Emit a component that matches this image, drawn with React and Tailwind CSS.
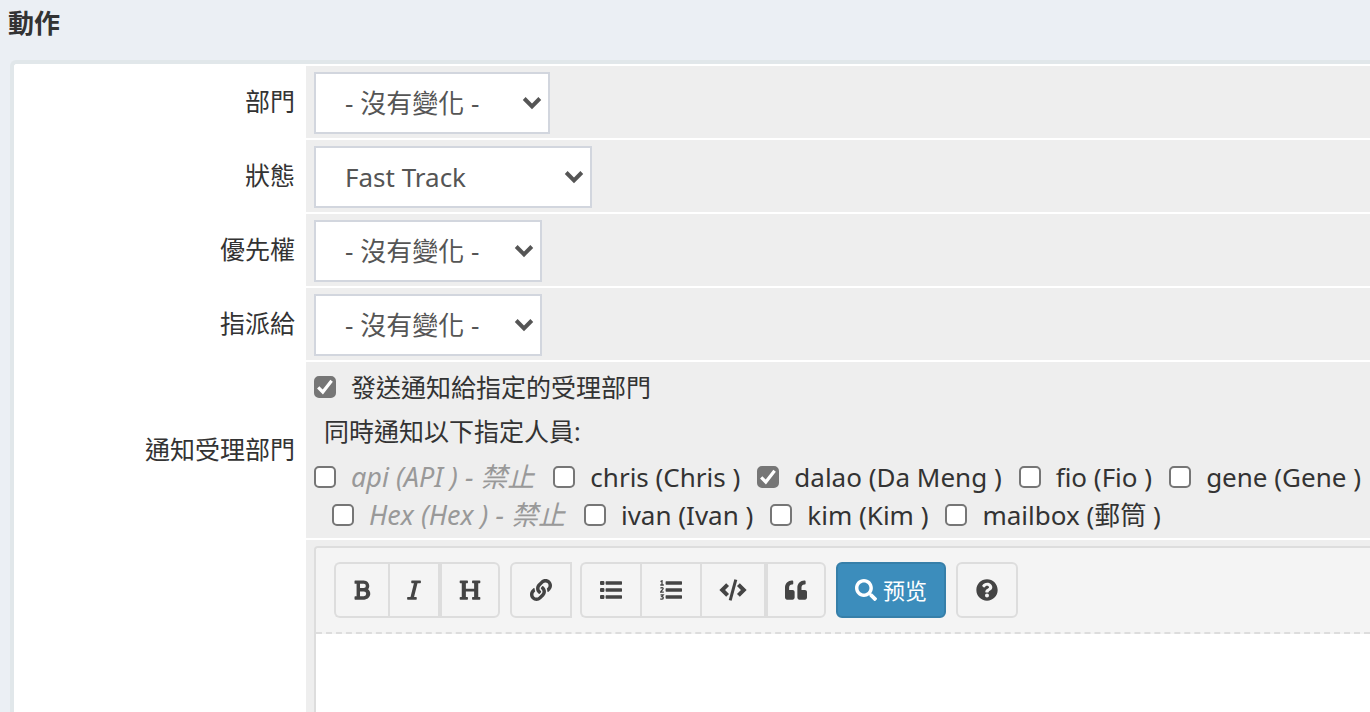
import React from "react";
import {
  FaBold,
  FaItalic,
  FaHeading,
  FaLink,
  FaQuoteLeft,
  FaSearch,
  FaQuestionCircle,
} from "react-icons/fa";

const NO_CHANGE = "- 沒有變化 -";

const selects = [
  { id: "dept", label: "部門", value: NO_CHANGE, width: "w-[236px]" },
  { id: "status", label: "狀態", value: "Fast Track", width: "w-[278px]" },
  { id: "priority", label: "優先權", value: NO_CHANGE, width: "w-[228px]" },
  { id: "assign", label: "指派給", value: NO_CHANGE, width: "w-[228px]" },
];

const people = [
  { id: "api", label: "api (API ) - 禁止", disabled: true },
  { id: "chris", label: "chris (Chris )" },
  { id: "dalao", label: "dalao (Da Meng )", checked: true },
  { id: "fio", label: "fio (Fio )" },
  { id: "gene", label: "gene (Gene )" },
  { id: "hex", label: "Hex (Hex ) - 禁止", disabled: true },
  { id: "ivan", label: "ivan (Ivan )" },
  { id: "kim", label: "kim (Kim )" },
  { id: "mailbox", label: "mailbox (郵筒 )" },
];

function BulletListIcon() {
  return (
    <svg viewBox="0 0 22 18" className="h-[18px] w-[22px]" fill="currentColor">
      <rect x="0" y="0" width="4.4" height="4" rx="1" />
      <rect x="0" y="7" width="4.4" height="4" rx="1" />
      <rect x="0" y="14" width="4.4" height="4" rx="1" />
      <rect x="5.6" y="0.3" width="16.4" height="3.4" rx="0.6" />
      <rect x="5.6" y="7.3" width="16.4" height="3.4" rx="0.6" />
      <rect x="5.6" y="14.3" width="16.4" height="3.4" rx="0.6" />
    </svg>
  );
}

function NumberListIcon() {
  return (
    <svg viewBox="0 0 22 20" className="h-5 w-[22px]" fill="currentColor">
      <g fill="none" stroke="currentColor" strokeWidth="1.3">
        <path d="M0.5 1.6 2 0.8V5M0.3 5H3.8" />
        <path d="M0.5 8.4C1.2 7.2 3.3 7.4 3.1 8.8 3 9.9 0.9 10.8 0.7 12.2H3.8" />
        <path d="M0.5 14.8H3.2L1.8 16.5C3.9 16.6 3.6 19.2 1.8 19.2 1.1 19.2 0.7 19 0.3 18.6" />
      </g>
      <rect x="5.6" y="1.3" width="16.4" height="3.4" rx="0.6" />
      <rect x="5.6" y="8.3" width="16.4" height="3.4" rx="0.6" />
      <rect x="5.6" y="15.3" width="16.4" height="3.4" rx="0.6" />
    </svg>
  );
}

function CodeIcon() {
  return (
    <svg viewBox="0 0 28 22" className="h-[22px] w-7" fill="none" stroke="currentColor">
      <path strokeWidth="4" d="M8.6 5.6 3.2 11 8.6 16.4M19.4 5.6 24.8 11 19.4 16.4" />
      <path strokeWidth="3" d="M16.8 0.6 11.2 21.4" />
    </svg>
  );
}

function Row({ label, htmlFor, children, className = "" }) {
  return (
    <div className={`flex ${className}`}>
      <div className="flex w-[292px] shrink-0 items-center justify-end pr-[11px] pb-[2px]">
        {label && <label htmlFor={htmlFor}>{label}</label>}
      </div>
      <div className="min-w-0 flex-1 bg-[#eeeeee] pl-2">{children}</div>
    </div>
  );
}

function Select({ id, value, width }) {
  return (
    <div className={`relative ${width}`}>
      <select
        id={id}
        defaultValue={value}
        className="block h-[62px] w-full appearance-none border-2 border-[#d2d6de] bg-white pl-[29px] text-[26px] text-[#555555]"
      >
        <option>{value}</option>
      </select>
      <svg
        viewBox="0 0 20 14"
        className="pointer-events-none absolute top-6 right-2 h-[14px] w-5"
        fill="none"
        stroke="#555555"
        strokeWidth="4"
      >
        <path d="M2.2 2.5 10 10.3 17.8 2.5" />
      </svg>
    </div>
  );
}

function Check({ id, label, checked, disabled }) {
  return (
    <div className="flex items-center gap-[15px] whitespace-nowrap">
      <span className="relative block size-[22px] shrink-0">
        <input
          id={id}
          type="checkbox"
          defaultChecked={checked}
          className="peer block size-[22px] appearance-none rounded-[5px] border-2 border-[#767676] bg-white checked:bg-[#767676]"
        />
        <svg
          viewBox="0 0 22 22"
          className="pointer-events-none absolute inset-0 hidden size-[22px] peer-checked:block"
          fill="none"
          stroke="#ffffff"
          strokeWidth="3.2"
        >
          <path d="M4.2 11.4 8.8 16 17.6 4.8" />
        </svg>
      </span>
      <label
        htmlFor={id}
        className={disabled ? "pr-[2px] text-[27px] leading-[38px] text-[#999999] italic" : ""}
      >
        {label}
      </label>
    </div>
  );
}

function Tool({ title, className, children }) {
  return (
    <button
      type="button"
      aria-label={title}
      className={`flex h-14 items-center justify-center border-2 border-[#dddddd] bg-[#f4f4f4] text-[22px] text-[#444444] ${className}`}
    >
      {children}
    </button>
  );
}

export default function App() {
  return (
    <div className="flex min-h-screen flex-col overflow-x-hidden bg-[#ebeff4] font-['Noto_Sans','Noto_Sans_CJK_TC',sans-serif] text-[25px] leading-[38px] text-[#333333]">
      <h2 className="h-[60px] pt-1 pl-2 text-[26px] leading-[38px] font-bold">動作</h2>
      <div className="ml-[10px] flex flex-1 flex-col gap-[2px] rounded-tl-md border-t-4 border-l-4 border-[#e1e7ea] bg-white pt-[2px]">
        {selects.map((s) => (
          <Row key={s.id} label={s.label} htmlFor={s.id}>
            <div className="pt-[6px] pb-1">
              <Select {...s} />
            </div>
          </Row>
        ))}
        <Row label="通知受理部門" htmlFor="notify">
          <div className="h-[176px] pt-[6px]">
            <Check id="notify" label="發送通知給指定的受理部門" checked />
            <p className="mt-[6px] mb-2 pl-[10px]">同時通知以下指定人員:</p>
            <div className="flex flex-wrap gap-x-[17px] text-[26px] leading-[38px] [&>*:nth-child(6)]:ml-[18px]">
              {people.map((p) => (
                <Check key={p.id} {...p} />
              ))}
            </div>
          </div>
        </Row>
        <Row className="flex-1">
          <div className="flex h-full flex-col pt-[6px]">
            <div className="flex flex-1 flex-col rounded-tl-[4px] border-t-2 border-l-2 border-[#dddddd] bg-white">
              <div className="flex rounded-tl-[2px] border-b-2 border-dashed border-[#dddddd] bg-[#f4f4f4] pt-[14px] pb-[14px] pl-[18px]">
                <div className="mr-[10px] flex">
                  <Tool title="粗體" className="w-[54px] rounded-l-md border-r-0">
                    <FaBold />
                  </Tool>
                  <Tool title="斜體" className="w-[52px]">
                    <FaItalic />
                  </Tool>
                  <Tool title="標題" className="w-[60px] rounded-r-md">
                    <FaHeading />
                  </Tool>
                </div>
                <Tool title="連結" className="mr-2 w-[62px] rounded-l-md">
                  <FaLink />
                </Tool>
                <div className="mr-[10px] flex">
                  <Tool title="項目清單" className="w-[60px] rounded-l-md border-r-0">
                    <BulletListIcon />
                  </Tool>
                  <Tool title="編號清單" className="w-[60px] border-r-0">
                    <NumberListIcon />
                  </Tool>
                  <Tool title="程式碼" className="w-[66px]">
                    <CodeIcon />
                  </Tool>
                  <Tool title="引用" className="w-[60px] rounded-r-md">
                    <FaQuoteLeft />
                  </Tool>
                </div>
                <button
                  type="button"
                  className="mr-[10px] flex h-14 w-[110px] items-center justify-center gap-[6px] rounded-md border-2 border-[#367fa9] bg-[#3c8dbc] text-[22px] text-white"
                >
                  <FaSearch />
                  <span className="font-['Noto_Sans','Noto_Sans_CJK_SC',sans-serif]">预览</span>
                </button>
                <Tool title="說明" className="w-[62px] rounded-md">
                  <FaQuestionCircle />
                </Tool>
              </div>
              <textarea
                aria-label="內容"
                className="block min-h-[78px] w-full flex-1 resize-none bg-white px-4 outline-none"
              />
            </div>
          </div>
        </Row>
      </div>
    </div>
  );
}
